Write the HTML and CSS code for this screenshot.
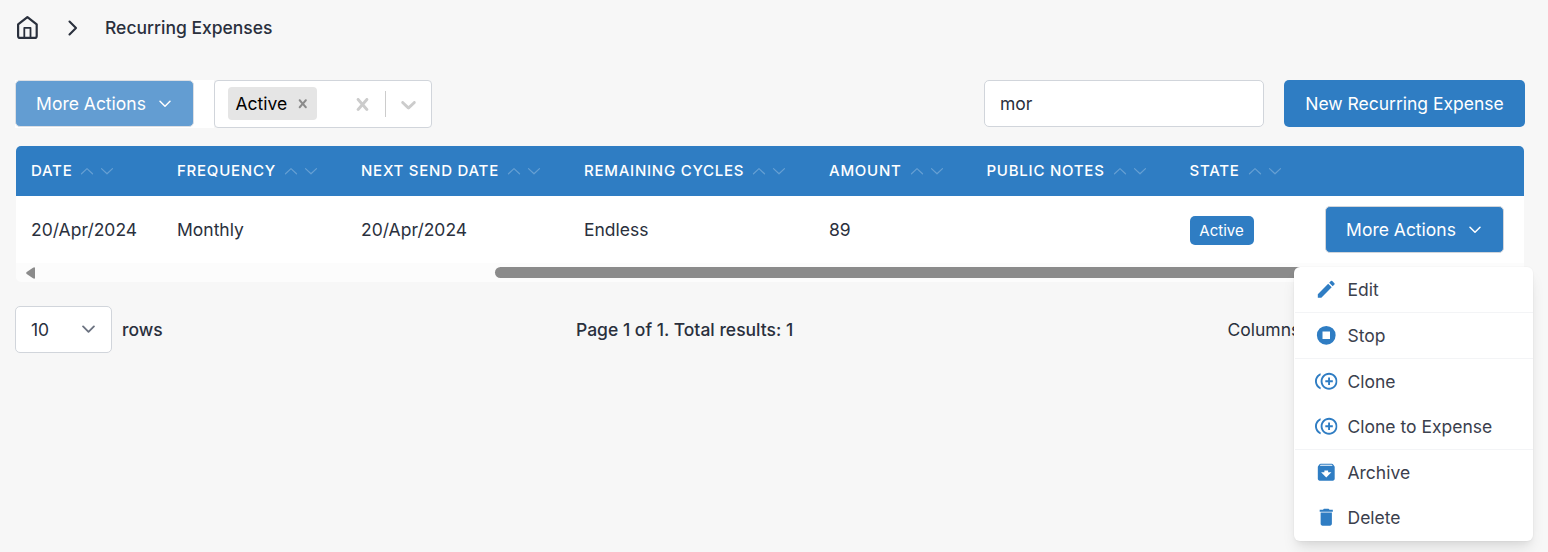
FILE: index.html
```html
<!DOCTYPE html>
<html lang="en">
<head>
<meta charset="utf-8">
<title>Recurring Expenses</title>
<link rel="stylesheet" href="styles.css">
</head>
<body>
<svg class="defs" width="0" height="0">
  <symbol id="down" viewBox="0 0 12 8"><path d="M1 1.2 6 6.2 11 1.2"/></symbol>
  <symbol id="sort" viewBox="0 0 34 10"><path d="M1.500 7.800 7 2.600 12.500 7.800M21.500 2.600 27 7.800 32.500 2.600"/></symbol>
  <symbol id="cross" viewBox="0 0 20 20"><path d="M14.348 14.849c-0.469 0.469-1.229 0.469-1.697 0l-2.651-3.030-2.651 3.029c-0.469 0.469-1.229 0.469-1.697 0-0.469-0.469-0.469-1.229 0-1.697l2.758-3.15-2.759-3.152c-0.469-0.469-0.469-1.228 0-1.697s1.228-0.469 1.697 0l2.652 3.031 2.651-3.031c0.469-0.469 1.228-0.469 1.697 0s0.469 1.229 0 1.697l-2.758 3.152 2.758 3.15c0.469 0.469 0.469 1.229 0 1.698z"/></symbol>
  <symbol id="clone" viewBox="0 0 24 24"><path d="M16 8h-2v3h-3v2h3v3h2v-3h3v-2h-3zM2 12c0-2.79 1.64-5.2 4.01-6.32V3.52C2.52 4.76 0 8.09 0 12s2.52 7.24 6.01 8.48v-2.16C3.64 17.2 2 14.79 2 12zm13-9c-4.96 0-9 4.04-9 9s4.04 9 9 9 9-4.04 9-9-4.04-9-9-9zm0 16c-3.86 0-7-3.14-7-7s3.14-7 7-7 7 3.14 7 7-3.14 7-7 7z"/></symbol>
</svg>
<main class="page">
  <nav class="breadcrumb">
    <svg class="home" viewBox="0 0 23 25"><path d="M2.100 9.400 11.400 2.100 20.700 9.400V20.900Q20.700 22.900 18.700 22.900H4.100Q2.100 22.900 2.100 20.900Z"/><path d="M8.300 22.700V12.800H14.500V22.700"/></svg>
    <svg class="crumb-arrow" viewBox="0 0 10 16"><path d="M1.500 1.500 8 8 1.500 14.500"/></svg>
    <span>Recurring Expenses</span>
  </nav>

  <section class="toolbar">
    <div class="bulk"><button class="btn btn-menu disabled">More Actions<svg class="down"><use href="#down"/></svg></button></div>
    <div class="select">
      <span class="tag">Active<svg class="tag-x"><use href="#cross"/></svg></span>
      <svg class="clear"><use href="#cross"/></svg>
      <i class="divider"></i>
      <svg class="open" viewBox="0 0 20 20"><path d="M4.516 7.548c0.436-0.446 1.043-0.481 1.576 0l3.908 3.747 3.908-3.747c0.533-0.481 1.141-0.446 1.574 0 0.436 0.445 0.408 1.197 0 1.615-0.406 0.418-4.695 4.502-4.695 4.502-0.217 0.223-0.502 0.335-0.787 0.335s-0.57-0.112-0.789-0.335c0 0-4.287-4.084-4.695-4.502s-0.436-1.17 0-1.615z"/></svg>
    </div>
    <div class="search">mor</div>
    <button class="btn btn-new">New Recurring Expense</button>
  </section>

  <section class="table">
    <div class="row head">
      <span>Date<svg class="sort"><use href="#sort"/></svg></span>
      <span>Frequency<svg class="sort"><use href="#sort"/></svg></span>
      <span>Next Send Date<svg class="sort"><use href="#sort"/></svg></span>
      <span>Remaining Cycles<svg class="sort"><use href="#sort"/></svg></span>
      <span>Amount<svg class="sort"><use href="#sort"/></svg></span>
      <span>Public Notes<svg class="sort"><use href="#sort"/></svg></span>
      <span>State<svg class="sort"><use href="#sort"/></svg></span>
      <span></span>
    </div>
    <div class="row body">
      <span>20/Apr/2024</span>
      <span>Monthly</span>
      <span>20/Apr/2024</span>
      <span>Endless</span>
      <span>89</span>
      <span></span>
      <span><b class="badge">Active</b></span>
      <span class="actions">
        <button class="btn btn-menu">More Actions<svg class="down"><use href="#down"/></svg></button>
        <div class="menu">
          <div class="group"><a class="item"><svg viewBox="0 0 24 24"><path d="M3 17.25V21h3.75L17.81 9.94l-3.75-3.75L3 17.25zM20.71 7.04a.996.996 0 0 0 0-1.41l-2.34-2.34a.996.996 0 0 0-1.41 0l-1.83 1.83 3.75 3.75 1.83-1.83z"/></svg>Edit</a></div>
          <div class="group"><a class="item"><svg viewBox="0 0 24 24"><path fill-rule="evenodd" d="M12 2a10 10 0 1 0 0 20 10 10 0 0 0 0-20zM8 8h8v8H8z"/></svg>Stop</a></div>
          <div class="group">
            <a class="item"><svg><use href="#clone"/></svg>Clone</a>
            <a class="item"><svg><use href="#clone"/></svg>Clone to Expense</a>
          </div>
          <div class="group">
            <a class="item"><svg viewBox="0 0 24 24"><path d="M20.54 5.23l-1.39-1.68C18.88 3.21 18.47 3 18 3H6c-.47 0-.88.21-1.16.55L3.46 5.23C3.17 5.57 3 6.02 3 6.5V19c0 1.1.9 2 2 2h14c1.1 0 2-.9 2-2V6.5c0-.48-.17-.93-.46-1.27zM12 17.5L6.500 12H10v-2h4v2h3.500L12 17.500zM5.120 5l.810-1h12l.940 1H5.120z"/></svg>Archive</a>
            <a class="item"><svg viewBox="0 0 24 24"><path d="M6 19c0 1.1.9 2 2 2h8c1.1 0 2-.9 2-2V7H6v12zM19 4h-3.500l-1-1h-5l-1 1H5v2h14V4z"/></svg>Delete</a>
          </div>
        </div>
      </span>
    </div>
    <div class="scrollbar">
      <svg class="scroll-left" viewBox="0 0 10 12"><path d="M9 0.700V11.300Q8.500 12 7 11.300L0.700 7Q-.3 6 .7 5L7 .7Q8.500 0 9 .7Z"/></svg>
      <i class="thumb"></i>
    </div>
  </section>

  <footer class="pager">
    <div class="rows"><span class="size">10<svg><use href="#down"/></svg></span>rows</div>
    <span class="total">Page 1 of 1. Total results: 1</span>
    <span class="columns">Columns</span>
  </footer>
</main>
</body>
</html>
```
FILE: styles.css
```css
* { box-sizing: border-box; }
body {
  margin: 0;
  background: #f7f7f7;
  color: #2a303d;
  font: 17.5px/25px Inter, "Liberation Sans", sans-serif;
  overflow: hidden;
}
svg { flex: none; }
.defs { position: absolute; }
.page { height: 552px; padding: 0 23px 0 15px; }

.breadcrumb { display: flex; align-items: center; height: 55px; padding-left: 1px; font-weight: 500; }
.breadcrumb span { height: 26px; }
.breadcrumb svg { fill: none; stroke: #2a303d; stroke-linejoin: round; stroke-linecap: round; }
.home { width: 23px; height: 25px; stroke-width: 2.2; }
.home path + path { stroke-width: 1.8; }
.crumb-arrow { width: 10px; height: 16px; margin: 0 27px 0 29px; stroke-width: 2.1; }

.toolbar { display: flex; align-items: flex-start; height: 66px; margin-top: 25px; }
.bulk { width: 199px; height: 48px; background: #fff; }
.btn {
  display: flex; align-items: center; justify-content: center;
  margin: 0; padding: 0; border: 0; border-radius: 5px;
  background: #2f7dc3; color: #fff; font: inherit; white-space: nowrap;
}
.btn-menu { width: 179px; height: 47px; padding-right: 2px; border: 1px solid #d1d5db; gap: 13px; }
.disabled { opacity: .75; }
.down { width: 12px; height: 8px; fill: none; stroke: #fff; stroke-width: 1.5; stroke-linecap: round; stroke-linejoin: round; }
.select {
  display: flex; align-items: center; width: 218px; height: 48px; padding-left: 13px;
  border: 1px solid #d1d5db; border-radius: 4px; background: #fff; fill: #ccc;
}
.tag {
  display: flex; align-items: center; width: 89px; height: 33px; margin-bottom: 1px; padding: 0 0 1px 7.500px;
  border-radius: 4px; background: #e5e5e5; color: #000;
}
.tag-x { width: 17.500px; height: 17.500px; margin: 1px 0 0 7px; fill: #8b8b8b; }
.clear { width: 25px; height: 25px; margin-left: 33px; }
.divider { width: 1px; height: 26px; margin: 0 10px; background: #ccc; }
.open { width: 25px; height: 25px; }
.search {
  width: 280px; height: 47px; margin-left: auto; padding: 10px 15px;
  border: 1px solid #d1d5db; border-radius: 5px; background: #fff;
}
.btn-new { width: 241px; height: 47px; margin-left: 20px; }

.table { width: 1508px; margin-left: 1px; }
.row { display: grid; grid-template-columns: 146px 184px 223px 245px 157.500px 203px 120px 1fr; align-items: center; }
.row > span { padding-left: 15px; white-space: nowrap; }
.head {
  height: 50px; padding-bottom: 2px; border-radius: 5px 5px 0 0; background: #2f7dc3; color: #fff;
  font-size: 15px; font-weight: 500; letter-spacing: .75px; text-transform: uppercase;
}
.sort { width: 34px; height: 10px; margin-left: 8px; fill: none; stroke: #659fd3; stroke-width: 1.2; stroke-linecap: round; stroke-linejoin: round; }
.body { height: 67px; background: #fff; }
.badge {
  display: block; width: 64px; height: 29px; margin-top: 1px; border-radius: 5px; background: #2f7dc3;
  color: #fff; font-size: 15px; font-weight: 400; line-height: 29px; text-align: center;
}
.actions { position: relative; justify-self: end; padding-right: 20px; }
.menu {
  position: absolute; top: 61px; right: -9px; z-index: 2; width: 239px; padding: 0 0 1px 1px;
  border-radius: 6px; background: #fff; color: #3b404d;
  box-shadow: 0 0 0 1px rgba(0,0,0,.015), 0 10px 15px -3px rgba(0,0,0,.1), 0 4px 6px -2px rgba(0,0,0,.05);
}
.group + .group { border-top: 1px solid #f3f4f6; }
.item { display: flex; align-items: center; gap: 10px; height: 45px; padding-left: 20px; }
.item svg { width: 22.500px; height: 22.500px; fill: #2f7dc3; }
.scrollbar { display: flex; align-items: center; height: 19px; padding-left: 10px; border-radius: 0 0 5px 5px; background: #fcfcfc; }
.scroll-left { width: 10px; height: 12px; fill: #8b8b8b; }
.thumb { width: 1009px; height: 11px; margin-left: 459px; border-radius: 6px; background: #8b8b8b; }

.pager { display: grid; grid-template-columns: 561px 1fr auto; align-items: center; height: 47px; margin-top: 24px; }
.rows { display: flex; align-items: center; gap: 10px; font-weight: 500; }
.size {
  display: flex; align-items: center; justify-content: space-between; width: 97px; height: 47px; padding: 0 16.500px 0 15px;
  border: 1px solid #d1d5db; border-radius: 5px; background: #fff; font-weight: 400;
}
.size svg { width: 13px; height: 9px; fill: none; stroke: #6b7280; stroke-width: 1.700; stroke-linecap: round; stroke-linejoin: round; }
.total { font-weight: 500; }
.columns { width: 297.500px; }
```
